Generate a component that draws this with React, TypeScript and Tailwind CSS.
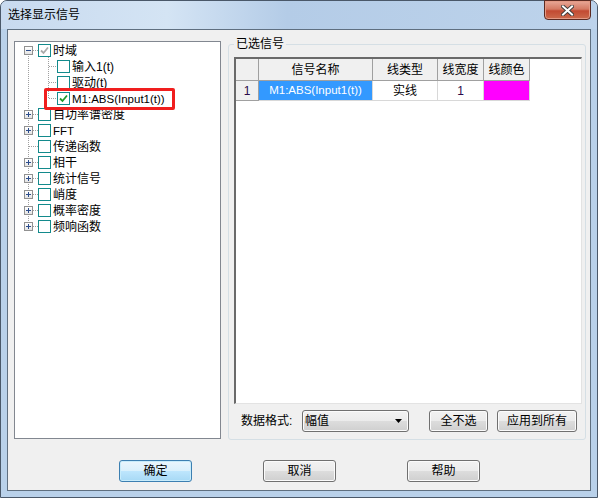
const FONT = "font-['Liberation_Sans','Noto_Sans_CJK_SC',sans-serif]";

type Node = { label: string; level: number; exp?: "+" | "-"; check?: "gray" | "green"; small?: boolean };

const nodes: Node[] = [
  { label: "时域", level: 0, exp: "-", check: "gray" },
  { label: "输入1(t)", level: 1 },
  { label: "驱动(t)", level: 1 },
  { label: "M1:ABS(Input1(t))", level: 1, check: "green", small: true },
  { label: "自功率谱密度", level: 0, exp: "+" },
  { label: "FFT", level: 0, exp: "+", small: true },
  { label: "传递函数", level: 0 },
  { label: "相干", level: 0, exp: "+" },
  { label: "统计信号", level: 0, exp: "+" },
  { label: "峭度", level: 0, exp: "+" },
  { label: "概率密度", level: 0, exp: "+" },
  { label: "频响函数", level: 0, exp: "+" },
];

function Expander({ sign }: { sign: "+" | "-" }) {
  return (
    <span className="flex h-[9px] w-[9px] items-center justify-center border border-[#919191] bg-[linear-gradient(#ffffff,#e4e4e4)]">
      <svg width="7" height="7" viewBox="0 0 7 7">
        <path d="M1 3.5H6" stroke="#2c4d8c" strokeWidth="1" />
        {sign === "+" && <path d="M3.5 1V6" stroke="#2c4d8c" strokeWidth="1" />}
      </svg>
    </span>
  );
}

function CheckBox({ check }: { check?: "gray" | "green" }) {
  return (
    <span className="flex h-[13px] w-[13px] shrink-0 items-center justify-center border border-[#138a8c] bg-white">
      {check && (
        <svg width="9" height="9" viewBox="0 0 9 9">
          <path
            d="M1 4.5L3.5 7L8 1.5"
            fill="none"
            stroke={check === "green" ? "#1f9a2a" : "#ababab"}
            strokeWidth="1.8"
          />
        </svg>
      )}
    </span>
  );
}

function TreeLines() {
  const rootRows = [0, 4, 5, 6, 7, 8, 9, 10, 11];
  return (
    <svg className="pointer-events-none absolute left-0 top-0" width="60" height="200">
      <g stroke="#a0a0a0" strokeWidth="1" strokeDasharray="1 1" fill="none">
        <path d="M13.5 8V185" />
        {rootRows.map((r) => (
          <path key={r} d={`M14 ${r * 16 + 8.5}H23`} />
        ))}
        <path d="M33.5 15V57" />
        {[1, 2, 3].map((r) => (
          <path key={r} d={`M34 ${r * 16 + 8.5}H42`} />
        ))}
      </g>
    </svg>
  );
}

function Button({ label, primary, className }: { label: string; primary?: boolean; className?: string }) {
  return (
    <div
      className={`flex h-[22px] items-center justify-center rounded-[3px] border text-[12px] text-black ${
        primary
          ? "border-[#3c7fb1] bg-[linear-gradient(#eaf6fd_0%,#d9f0fc_50%,#bee6fd_50%,#a7d9f5_100%)] shadow-[inset_0_0_0_1px_#c8ecfb]"
          : "border-[#707070] bg-[linear-gradient(#f2f2f2_0%,#ebebeb_50%,#dddddd_50%,#cfcfcf_100%)] shadow-[inset_0_0_0_1px_#fbfbfb]"
      } ${className ?? ""}`}
    >
      {label}
    </div>
  );
}

export default function App() {
  return (
    <div className={`h-[498px] w-[598px] bg-white ${FONT}`}>
      <div className="relative flex h-[498px] w-[598px] flex-col rounded-t-[7px] border border-[#4a5869] bg-[#b9d1ea]">
        {/* title bar */}
        <div className="flex h-[28px] items-center rounded-t-[6px] bg-[linear-gradient(90deg,#c8daef_0%,#d4e4f4_28%,#b4cce7_48%,#bdd3eb_100%)] pl-[7px] text-[12px] text-black">
          选择显示信号
        </div>
        <div className="absolute right-[6px] top-[-1px] flex h-[20px] w-[47px] items-center justify-center rounded-b-[4px] border border-[#5b2a22] bg-[linear-gradient(#e8a898_0%,#d47a64_45%,#c24a32_55%,#cc6a4c_100%)] shadow-[inset_0_0_0_1px_#e39a86]">
          <svg width="13" height="11" viewBox="0 0 13 11">
            <path d="M2 1.5L11 9.5M11 1.5L2 9.5" stroke="#3a3a3a" strokeWidth="3.8" strokeLinecap="square" />
            <path d="M2 1.5L11 9.5M11 1.5L2 9.5" stroke="#ffffff" strokeWidth="2" strokeLinecap="square" />
          </svg>
        </div>

        {/* client area */}
        <div className="mx-[6px] flex h-[462px] w-[584px] flex-col border border-[#5f6f80] bg-[#f0f0f0]">
          <div className="flex items-start pl-[6px] pt-[11px]">
            {/* tree */}
            <div className="h-[398px] w-[207px] border border-[#828790] bg-white text-[12px] text-black">
              <div className="relative">
                <TreeLines />
                {nodes.map((n) => (
                  <div key={n.label} className="relative flex h-[16px] items-center">
                    <span className={`flex shrink-0 items-center ${n.level === 0 ? "w-[23px] pl-[9px]" : "w-[42px]"}`}>
                      {n.exp && <Expander sign={n.exp} />}
                    </span>
                    <CheckBox check={n.check} />
                    <span className={`ml-[2px] mt-[2px] whitespace-nowrap leading-[16px] ${n.small ? "text-[11.5px]" : ""}`}>
                      {n.label}
                    </span>
                  </div>
                ))}
                <div className="pointer-events-none absolute left-[29px] top-[46px] h-[22px] w-[131px] rounded-[2px] border-[3px] border-[#f01e1e]" />
              </div>
            </div>

            {/* group box */}
            <div className="relative ml-[7px] mt-[3px] h-[396px] w-[358px] rounded-[3px] border border-[#d5dfe5]">
              <span className="absolute left-[5px] top-[-9px] bg-[#f0f0f0] px-[2px] text-[12px] leading-[16px] text-black">
                已选信号
              </span>
              <div className="ml-[5px] mt-[12px] h-[347px] w-[348px] border-b border-l-2 border-r border-t-2 border-b-[#e3e3e3] border-l-[#6a6a6a] border-r-[#e3e3e3] border-t-[#6a6a6a] bg-white text-[12px] text-black">
                <div className="flex h-[22px]">
                  <div className="w-[23px] border-b border-r border-[#a0a0a0] bg-[#f0f0f0]" />
                  <div className="flex w-[114px] items-center justify-center border-b border-r border-[#a0a0a0] bg-[#f0f0f0]">信号名称</div>
                  <div className="flex w-[65px] items-center justify-center border-b border-r border-[#a0a0a0] bg-[#f0f0f0]">线类型</div>
                  <div className="flex w-[46px] items-center justify-center border-b border-r border-[#a0a0a0] bg-[#f0f0f0]">线宽度</div>
                  <div className="flex w-[46px] items-center justify-center border-b border-r border-[#a0a0a0] bg-[#f0f0f0]">线颜色</div>
                </div>
                <div className="flex h-[20px]">
                  <div className="flex w-[23px] items-center justify-center border-b border-r border-[#a0a0a0] bg-[#f0f0f0] text-[#2a0a4a]">1</div>
                  <div className="flex w-[114px] items-center justify-center border-b border-r border-[#d8d8d8] bg-[#3399ff] text-[11.5px] text-white">M1:ABS(Input1(t))</div>
                  <div className="flex w-[65px] items-center justify-center border-b border-r border-[#d8d8d8]">实线</div>
                  <div className="flex w-[46px] items-center justify-center border-b border-r border-[#d8d8d8] text-[#2a0a4a]">1</div>
                  <div className="w-[46px] border-b border-r border-[#d8d8d8] bg-[#ff00ff]" />
                </div>
              </div>

              <div className="mt-[6px] flex h-[22px] items-center text-[12px] text-black">
                <span className="ml-[12px] w-[61px]">数据格式:</span>
                <div className="flex h-[22px] w-[107px] items-center justify-between rounded-[3px] border border-[#707070] bg-[linear-gradient(#f2f2f2_0%,#ebebeb_50%,#dddddd_50%,#cfcfcf_100%)] pl-[2px] pr-[6px] shadow-[inset_0_0_0_1px_#fbfbfb]">
                  <span>幅值</span>
                  <svg width="7" height="4" viewBox="0 0 7 4">
                    <path d="M0 0H7L3.5 4Z" fill="#000" />
                  </svg>
                </div>
                <Button label="全不选" className="ml-[20px] w-[59px]" />
                <Button label="应用到所有" className="ml-[9px] w-[80px]" />
              </div>
            </div>
          </div>

          {/* bottom buttons */}
          <div className="mt-[20px] flex pl-[111px]">
            <Button label="确定" primary className="w-[73px]" />
            <Button label="取消" className="ml-[71px] w-[73px]" />
            <Button label="帮助" className="ml-[71px] w-[73px]" />
          </div>
        </div>
      </div>
    </div>
  );
}
